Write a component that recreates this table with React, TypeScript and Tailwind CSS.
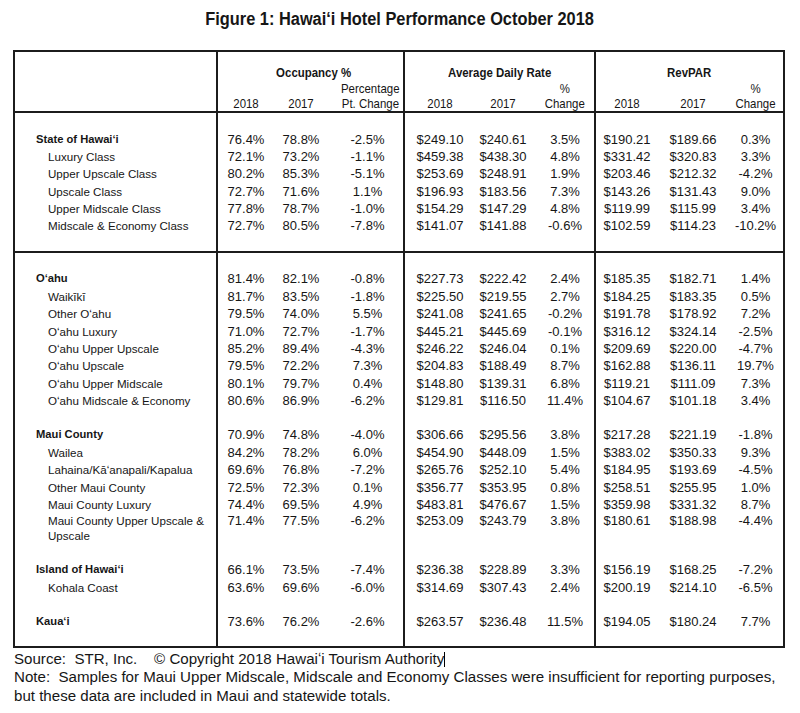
type Row = {
  label?: string;
  label2?: string;
  bold?: boolean;
  v?: string[];
  h: number;
};

const S = (h: number): Row => ({ h });

const section1: Row[] = [
  S(18),
  { label: "State of Hawaiʻi", bold: true, h: 17.2, v: ["76.4%", "78.8%", "-2.5%", "$249.10", "$240.61", "3.5%", "$190.21", "$189.66", "0.3%"] },
  { label: "Luxury Class", h: 17.2, v: ["72.1%", "73.2%", "-1.1%", "$459.38", "$438.30", "4.8%", "$331.42", "$320.83", "3.3%"] },
  { label: "Upper Upscale Class", h: 17.2, v: ["80.2%", "85.3%", "-5.1%", "$253.69", "$248.91", "1.9%", "$203.46", "$212.32", "-4.2%"] },
  { label: "Upscale Class", h: 17.2, v: ["72.7%", "71.6%", "1.1%", "$196.93", "$183.56", "7.3%", "$143.26", "$131.43", "9.0%"] },
  { label: "Upper Midscale Class", h: 17.2, v: ["77.8%", "78.7%", "-1.0%", "$154.29", "$147.29", "4.8%", "$119.99", "$115.99", "3.4%"] },
  { label: "Midscale & Economy Class", h: 17.2, v: ["72.7%", "80.5%", "-7.8%", "$141.07", "$141.88", "-0.6%", "$102.59", "$114.23", "-10.2%"] },
  S(16.8),
];

const section2: Row[] = [
  S(17.3),
  { label: "Oʻahu", bold: true, h: 17.4, v: ["81.4%", "82.1%", "-0.8%", "$227.73", "$222.42", "2.4%", "$185.35", "$182.71", "1.4%"] },
  { label: "Waikīkī", h: 17.4, v: ["81.7%", "83.5%", "-1.8%", "$225.50", "$219.55", "2.7%", "$184.25", "$183.35", "0.5%"] },
  { label: "Other Oʻahu", h: 17.4, v: ["79.5%", "74.0%", "5.5%", "$241.08", "$241.65", "-0.2%", "$191.78", "$178.92", "7.2%"] },
  { label: "Oʻahu Luxury", h: 17.4, v: ["71.0%", "72.7%", "-1.7%", "$445.21", "$445.69", "-0.1%", "$316.12", "$324.14", "-2.5%"] },
  { label: "Oʻahu Upper Upscale", h: 17.4, v: ["85.2%", "89.4%", "-4.3%", "$246.22", "$246.04", "0.1%", "$209.69", "$220.00", "-4.7%"] },
  { label: "Oʻahu Upscale", h: 17.4, v: ["79.5%", "72.2%", "7.3%", "$204.83", "$188.49", "8.7%", "$162.88", "$136.11", "19.7%"] },
  { label: "Oʻahu Upper Midscale", h: 17.4, v: ["80.1%", "79.7%", "0.4%", "$148.80", "$139.31", "6.8%", "$119.21", "$111.09", "7.3%"] },
  { label: "Oʻahu Midscale & Economy", h: 17.4, v: ["80.6%", "86.9%", "-6.2%", "$129.81", "$116.50", "11.4%", "$104.67", "$101.18", "3.4%"] },
  S(16.8),
  { label: "Maui County", bold: true, h: 17.4, v: ["70.9%", "74.8%", "-4.0%", "$306.66", "$295.56", "3.8%", "$217.28", "$221.19", "-1.8%"] },
  { label: "Wailea", h: 17.4, v: ["84.2%", "78.2%", "6.0%", "$454.90", "$448.09", "1.5%", "$383.02", "$350.33", "9.3%"] },
  { label: "Lahaina/Kāʻanapali/Kapalua", h: 17.4, v: ["69.6%", "76.8%", "-7.2%", "$265.76", "$252.10", "5.4%", "$184.95", "$193.69", "-4.5%"] },
  { label: "Other Maui County", h: 17.4, v: ["72.5%", "72.3%", "0.1%", "$356.77", "$353.95", "0.8%", "$258.51", "$255.95", "1.0%"] },
  { label: "Maui County Luxury", h: 17.4, v: ["74.4%", "69.5%", "4.9%", "$483.81", "$476.67", "1.5%", "$359.98", "$331.32", "8.7%"] },
  { label: "Maui County Upper Upscale &", label2: "Upscale", h: 30, v: ["71.4%", "77.5%", "-6.2%", "$253.09", "$243.79", "3.8%", "$180.61", "$188.98", "-4.4%"] },
  S(18),
  { label: "Island of Hawaiʻi", bold: true, h: 17.4, v: ["66.1%", "73.5%", "-7.4%", "$236.38", "$228.89", "3.3%", "$156.19", "$168.25", "-7.2%"] },
  { label: "Kohala Coast", h: 17.4, v: ["63.6%", "69.6%", "-6.0%", "$314.69", "$307.43", "2.4%", "$200.19", "$214.10", "-6.5%"] },
  S(17.4),
  { label: "Kauaʻi", bold: true, h: 17.4, v: ["73.6%", "76.2%", "-2.6%", "$263.57", "$236.48", "11.5%", "$194.05", "$180.24", "7.7%"] },
  S(15),
];

const line = "border-[#1c1c1c]";

// header text is condensed in the original, squeeze it a bit
function N({ children, right }: { children: React.ReactNode; right?: boolean }) {
  return (
    <span className={`inline-block whitespace-nowrap scale-x-[0.88] ${right ? "origin-right" : "origin-center"}`}>
      {children}
    </span>
  );
}

function DataRow({ r }: { r: Row }) {
  const wrap = !!r.label2;
  const align = wrap ? "items-start" : "items-center";
  const v = r.v ?? [];
  return (
    <div className="flex" style={{ height: r.h }}>
      <div className={`w-[203px] border-r-2 ${line} flex ${align} leading-[15px] ${r.bold ? "font-bold text-[11.2px] pl-[21px]" : "text-[11.6px] pl-[33px]"}`}>
        {r.label && (
          <div>
            {r.label}
            {r.label2 && <br />}
            {r.label2}
          </div>
        )}
      </div>
      <div className={`w-[187px] border-r-2 ${line} grid grid-cols-[56px_54px_1fr] ${align} text-[13px] leading-[15px] text-center`}>
        <span>{v[0]}</span>
        <span>{v[1]}</span>
        <span className="pl-[4px]">{v[2]}</span>
      </div>
      <div className={`w-[191px] border-r-2 ${line} grid grid-cols-[70px_56px_1fr] ${align} text-[13px] leading-[15px] text-center`}>
        <span>{v[3]}</span>
        <span>{v[4]}</span>
        <span className="pl-[5px]">{v[5]}</span>
      </div>
      <div className={`flex-1 grid grid-cols-[62px_70px_1fr] ${align} text-[13px] leading-[15px] text-center`}>
        <span>{v[6]}</span>
        <span>{v[7]}</span>
        <span>{v[8]}</span>
      </div>
    </div>
  );
}

function Header() {
  return (
    <div className={`flex h-[61px] border-b-2 ${line} text-[13px]`}>
      <div className={`w-[203px] border-r-2 ${line}`} />
      <div className={`w-[187px] border-r-2 ${line} pt-[13px]`}>
        <div className="h-[16px] leading-[16px] text-center font-bold pl-[6px]">
          <N>Occupancy %</N>
        </div>
        <div className="h-[15px] leading-[15px] text-right pr-[4px]">
          <N right>Percentage</N>
        </div>
        <div className="grid grid-cols-[56px_54px_1fr] h-[15px] leading-[15px] text-center">
          <N>2018</N>
          <N>2017</N>
          <span className="text-right pr-[4px]">
            <N right>Pt. Change</N>
          </span>
        </div>
      </div>
      <div className={`w-[191px] border-r-2 ${line} pt-[13px]`}>
        <div className="h-[16px] leading-[16px] text-center font-bold">
          <N>Average Daily Rate</N>
        </div>
        <div className="grid grid-cols-[70px_56px_1fr] h-[15px] leading-[15px] text-center">
          <span />
          <span />
          <span className="pl-[5px]">
            <N>%</N>
          </span>
        </div>
        <div className="grid grid-cols-[70px_56px_1fr] h-[15px] leading-[15px] text-center">
          <N>2018</N>
          <N>2017</N>
          <span className="pl-[5px]">
            <N>Change</N>
          </span>
        </div>
      </div>
      <div className="flex-1 pt-[13px]">
        <div className="h-[16px] leading-[16px] text-center font-bold">
          <N>RevPAR</N>
        </div>
        <div className="grid grid-cols-[62px_70px_1fr] h-[15px] leading-[15px] text-center">
          <span />
          <span />
          <N>%</N>
        </div>
        <div className="grid grid-cols-[62px_70px_1fr] h-[15px] leading-[15px] text-center">
          <N>2018</N>
          <N>2017</N>
          <N>Change</N>
        </div>
      </div>
    </div>
  );
}

export default function App() {
  return (
    <div className="w-[800px] h-[713px] bg-white text-[#161616] font-['Liberation_Sans',Arial,sans-serif] overflow-hidden">
      <div className="pt-[7px] h-[50px] leading-[24px] text-center text-[18px] font-bold">
        <span className="inline-block whitespace-nowrap scale-x-[0.91]">
          Figure 1: Hawaiʻi Hotel Performance October 2018
        </span>
      </div>
      <div className={`ml-[13px] w-[772px] border-2 ${line}`}>
        <Header />
        <div className={`border-b-2 ${line}`}>
          {section1.map((r, i) => (
            <DataRow key={i} r={r} />
          ))}
        </div>
        <div>
          {section2.map((r, i) => (
            <DataRow key={i} r={r} />
          ))}
        </div>
      </div>
      <div className="pl-[14px] pt-[2px] text-[15.1px] leading-[18.5px] whitespace-pre">
        <div>
          {"Source:  STR, Inc.    © Copyright 2018 Hawaiʻi Tourism Authority"}
          <span className="inline-block w-[1px] h-[15px] bg-black align-[-3px]" />
        </div>
        <div>{"Note:  Samples for Maui Upper Midscale, Midscale and Economy Classes were insufficient for reporting purposes,"}</div>
        <div>but these data are included in Maui and statewide totals.</div>
      </div>
    </div>
  );
}
